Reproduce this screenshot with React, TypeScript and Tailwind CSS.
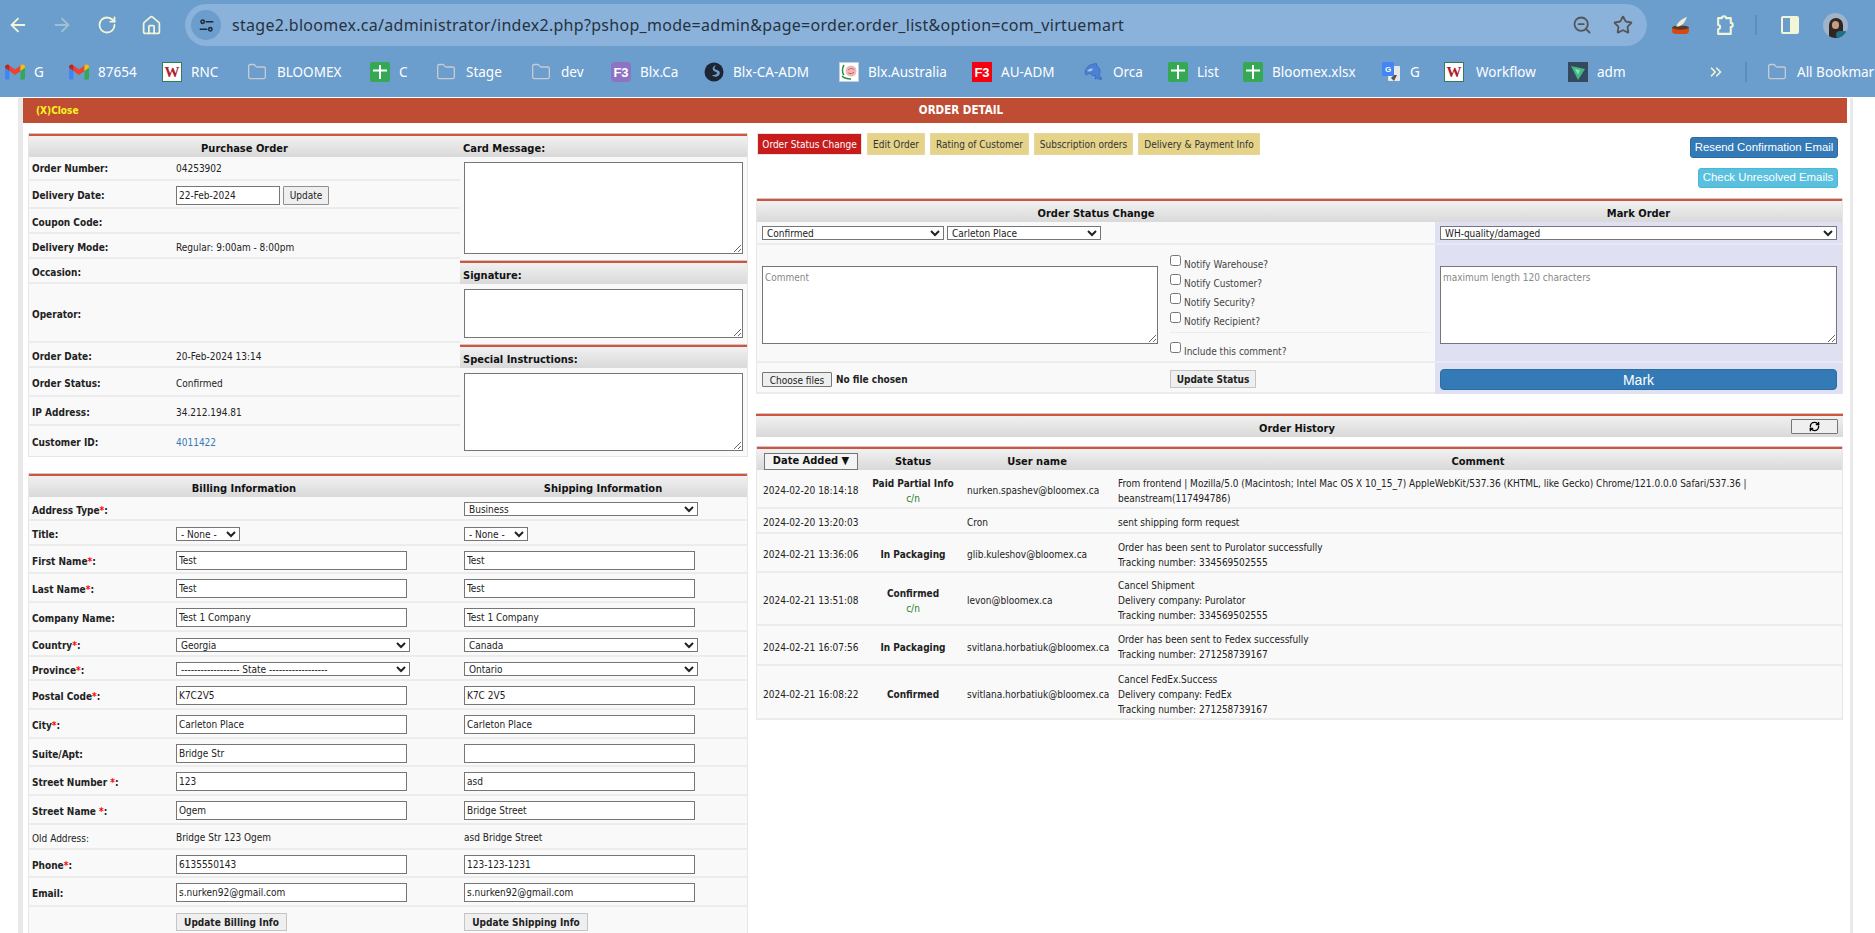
import { ArrowLeft, ArrowRight, ChevronsRight, Folder, House, RefreshCw, RotateCw, Star, ZoomOut } from "lucide-react";
import type { ReactNode } from "react";

const uiFont = "font-['DejaVu_Sans_Condensed','DejaVu_Sans',sans-serif]";

function Sheet() {
  return (
    <svg viewBox="0 0 20 20" className="h-5 w-5">
      <rect width="20" height="20" rx="2" fill="#34a853" />
      <path d="M9 3h2v4.500h6v2h-6V17H9V9.500H3v-2h6z" fill="#fff" />
    </svg>
  );
}

function Gmail() {
  return (
    <svg viewBox="0 0 20 16" className="h-4 w-5">
      <path d="M0 3v11a1.500 1.500 0 0 0 1.500 1.500H4.500V7z" fill="#4285f4" />
      <path d="M20 3v11a1.500 1.500 0 0 1-1.500 1.500H15.500V7z" fill="#34a853" />
      <path d="M4.500 7 10 11l5.500-4V1.500L10 5.500 4.500 1.500z" fill="#ea4335" />
      <path d="M0 3c0-2.500 3-3.500 4.500-1.500V7L0 3.800z" fill="#c5221f" />
      <path d="M20 3c0-2.500-3-3.500-4.500-1.500V7L20 3.800z" fill="#fbbc04" />
    </svg>
  );
}

function Wiki() {
  return (
    <span className="flex h-5 w-5 items-center justify-center border border-[#2f7d5b] bg-white font-['Liberation_Serif',serif] text-[15px] font-bold leading-none text-[#b01c2e]">
      W
    </span>
  );
}

function F3({ bg, square }: { bg: string; square?: boolean }) {
  return (
    <span className={`flex h-5 w-5 items-center justify-center font-['Liberation_Sans',sans-serif] text-[13px] font-bold leading-none text-white ${bg} ${square ? "" : "rounded-[4px]"}`}>
      F3
    </span>
  );
}

function Globe() {
  return (
    <svg viewBox="0 0 20 20" className="h-5 w-5">
      <circle cx="10" cy="10" r="9.500" fill="#1d2530" />
      <path d="M12 3c-3 1-4 3-3 5s4 1.500 4 3-2 2-5 2c1 1.500 3 2 5 1.500 3-1 3.500-4 2-5.500s-4.500-1-4.500-3c0-1 1-2 1.500-3z" fill="#6b9dcd" />
    </svg>
  );
}

function Rose() {
  return (
    <svg viewBox="0 0 20 20" className="h-5 w-5">
      <rect width="20" height="20" fill="#fff" />
      <rect x=".5" y=".5" width="19" height="19" fill="none" stroke="#bcd0e6" />
      <circle cx="12" cy="9" r="5.500" fill="#efb7b7" />
      <path d="M9 8c2-2 5-2 6 0M9.500 11c2 1 4 1 5.500-1" stroke="#c85a5a" strokeWidth="1" fill="none" />
      <path d="M5 3C3 6 3 11 5 13M3 14c3 3 6 3 9 3" stroke="#2f8a45" strokeWidth="1.500" fill="none" />
    </svg>
  );
}

function Orca() {
  return (
    <svg viewBox="0 0 20 20" className="h-5 w-5">
      <path d="M1 10C2 5 6 2 11 2l1-1 1 3c3 2 4 6 2 9l3 4c-2 1-4 0-5-1l-2 1 1-3c-3 0-5-1-6-3L2 13z" fill="#4b82d6" stroke="#2f63b5" strokeWidth=".7" />
      <path d="M3 9c2-2 4-3 6-2-1 2-3 3-6 2z" fill="#a8c8f0" />
    </svg>
  );
}

function Translate() {
  return (
    <svg viewBox="0 0 20 20" className="h-5 w-5">
      <rect x="7" y="4" width="12" height="15" rx="1" fill="#e8e8e8" />
      <rect x="1" y="0" width="12" height="14" rx="1.500" fill="#4285f4" />
      <text x="7" y="10" fontSize="8" fontWeight="bold" textAnchor="middle" fill="#fff" fontFamily="Liberation Sans">G</text>
      <path d="M10 16l3-3h3l-3 6z" fill="#555" />
    </svg>
  );
}

function Adm() {
  return (
    <svg viewBox="0 0 20 20" className="h-5 w-5">
      <rect width="20" height="20" fill="#34495e" />
      <path d="M3 4l14 3-7 11z" fill="#41b883" />
      <path d="M7 7l5 1-2 5z" fill="#8fdcb8" />
    </svg>
  );
}

const FolderIcon = () => <Folder className="h-5 w-5 text-[#c8ccd0]" strokeWidth={1.6} />;

const bookmarks: { icon: ReactNode; label: string; width: string; gap?: string }[] = [
  { icon: <Gmail />, label: "G", width: "w-[64px]" },
  { icon: <Gmail />, label: "87654", width: "w-[93px]" },
  { icon: <Wiki />, label: "RNC", width: "w-[85px]" },
  { icon: <FolderIcon />, label: "BLOOMEX", width: "w-[123px]", gap: "gap-[10px]" },
  { icon: <Sheet />, label: "C", width: "w-[66px]" },
  { icon: <FolderIcon />, label: "Stage", width: "w-[95px]", gap: "gap-[10px]" },
  { icon: <FolderIcon />, label: "dev", width: "w-[80px]", gap: "gap-[10px]" },
  { icon: <F3 bg="bg-[#8e72c4]" />, label: "Blx.Ca", width: "w-[93px]" },
  { icon: <Globe />, label: "Blx-CA-ADM", width: "w-[135px]" },
  { icon: <Rose />, label: "Blx.Australia", width: "w-[133px]" },
  { icon: <F3 bg="bg-[#f5000f]" square />, label: "AU-ADM", width: "w-[112px]" },
  { icon: <Orca />, label: "Orca", width: "w-[84px]" },
  { icon: <Sheet />, label: "List", width: "w-[75px]" },
  { icon: <Sheet />, label: "Bloomex.xlsx", width: "w-[138px]" },
  { icon: <Translate />, label: "G", width: "w-[63px]" },
  { icon: <Wiki />, label: "Workflow", width: "w-[124px]", gap: "gap-[12px]" },
  { icon: <Adm />, label: "adm", width: "w-[139px]" },
];

function BrowserChrome() {
  return (
    <div className="h-[97px] shrink-0 overflow-hidden bg-[#6b9dcd] font-['Noto_Sans',sans-serif]">
      <div className="flex h-[50px] items-start pt-1">
        <div className="flex h-[42px] w-[185px] items-center text-[#f1f6d6]">
          <ArrowLeft className="ml-[7px] h-[22px] w-[22px]" strokeWidth={2} />
          <ArrowRight className="ml-[22px] h-[22px] w-[22px] opacity-40" strokeWidth={2} />
          <RotateCw className="ml-[24px] h-[20px] w-[20px]" strokeWidth={2.2} />
          <House className="ml-[24px] h-[21px] w-[21px]" strokeWidth={2} />
        </div>
        <div className="flex h-[42px] w-[1462px] items-center rounded-full bg-[#8bb2db] pl-[6px] pr-[14px]">
          <div className="flex h-[30px] w-[30px] items-center justify-center rounded-full bg-[#6b9dcd]">
            <svg viewBox="0 0 20 20" className="h-[17px] w-[17px]" fill="none" stroke="#202a36" strokeWidth="1.800">
              <circle cx="5.500" cy="5.500" r="2" />
              <path d="M9 5.500h9M2 14.500h9" />
              <circle cx="14.500" cy="14.500" r="2" />
            </svg>
          </div>
          <span className="ml-[11px] flex-1 whitespace-nowrap text-[16px] tracking-[0.29px] text-[#26323f]">
            stage2.bloomex.ca/administrator/index2.php?pshop_mode=admin&amp;page=order.order_list&amp;option=com_virtuemart
          </span>
          <ZoomOut className="h-[20px] w-[20px] text-[#555]" strokeWidth={2.2} />
          <Star className="ml-[21px] h-[20px] w-[20px] text-[#555]" strokeWidth={2.2} />
        </div>
        <div className="flex h-[42px] flex-1 items-center">
          <svg viewBox="0 0 18 18" className="ml-[24px] h-[19px] w-[19px]">
            <path d="M1 11h16v3c0 2-1.500 3-3 3H4c-1.500 0-3-1-3-3z" fill="#d9480f" />
            <ellipse cx="9" cy="11" rx="8" ry="2" fill="#5b3a29" />
            <path d="M5 10C6 6 10 3 15 1c-1 4-4 8-8 9z" fill="#f3ecd2" />
          </svg>
          <svg viewBox="0 0 20 20" className="ml-[25px] h-[21px] w-[21px]" fill="none" stroke="#f1f6d6" strokeWidth="2">
            <path d="M3 3h3.500c0-2.500 4-2.500 4 0H15v4.500c2.500 0 2.500 4 0 4V18H3v-4.500c2.500 0 2.500-4 0-4z" strokeLinejoin="round" />
          </svg>
          <span className="ml-[19px] h-[20px] w-[2px] bg-[#5e8dbb]" />
          <span className="ml-[24px] flex h-[18px] w-[18px] rounded-[2px] border-2 border-[#f1f6d6]">
            <span className="ml-auto h-full w-[7px] bg-[#f1f6d6]" />
          </span>
          <span className="relative ml-[24px] h-[25px] w-[25px] overflow-hidden rounded-full bg-[#9fb4c8]">
            <span className="absolute left-[6px] top-[5px] h-[22px] w-[14px] rounded-t-full bg-[#2e2622]" />
            <span className="absolute left-[9px] top-[8px] h-[8px] w-[7px] rounded-full bg-[#c99d84]" />
            <span className="absolute left-[13px] top-[18px] h-[8px] w-[12px] rounded-full bg-[#1f6f86]" />
          </span>
        </div>
      </div>
      <div className="flex h-[44px] items-center whitespace-nowrap pl-[5px] text-[13.5px] text-white">
        {bookmarks.map((b, i) => (
          <div key={i} className={`flex shrink-0 items-center ${b.gap ?? "gap-[9px]"} ${b.width}`}>
            <span className="flex w-5 items-center justify-center">{b.icon}</span>
            <span>{b.label}</span>
          </div>
        ))}
        <ChevronsRight className="h-[18px] w-[18px] shrink-0 text-[#f1f6d6]" strokeWidth={2.2} />
        <span className="ml-[20px] h-[20px] w-[2px] shrink-0 bg-[#5e8dbb]" />
        <span className="ml-[20px] flex shrink-0 items-center gap-[10px]">
          <FolderIcon />
          <span>All Bookmarks</span>
        </span>
      </div>
    </div>
  );
}

function SectionHead({ children, className = "" }: { children?: ReactNode; className?: string }) {
  return (
    <div className={`h-[24px] shrink-0 border-t border-[#c9c9c9] ${className}`}>
      <div className="flex h-[23px] items-center border-t-2 border-[#d4533f] bg-gradient-to-b from-[#f1f1f1] to-[#d9d9d9] pt-[6px] text-[11px] font-bold text-[#111]">
        {children}
      </div>
    </div>
  );
}

const orderRows: { label: string; value?: ReactNode; height: string; pad: string }[] = [
  { label: "Order Number:", value: "04253902", height: "h-[24px]", pad: "pt-0" },
  {
    label: "Delivery Date:",
    height: "h-[28px]",
    pad: "pt-[3px]",
    value: (
      <span className="flex items-center gap-[3px]">
        <input defaultValue="22-Feb-2024" className="h-[19px] w-[104px] border border-[#767676] bg-white px-[2px] outline-none" />
        <button className="h-[19px] w-[46px] rounded-[1px] border border-[#8f8f8f] bg-[#efefef]">Update</button>
      </span>
    ),
  },
  { label: "Coupon Code:", height: "h-[25px]", pad: "pt-[4px]" },
  { label: "Delivery Mode:", value: "Regular: 9:00am - 8:00pm", height: "h-[25px]", pad: "pt-[4px]" },
  { label: "Occasion:", height: "h-[25px]", pad: "pt-[4px]" },
  { label: "Operator:", height: "h-[59px]", pad: "pt-[3px]" },
  { label: "Order Date:", value: "20-Feb-2024 13:14", height: "h-[25px]", pad: "pt-[3px]" },
  { label: "Order Status:", value: "Confirmed", height: "h-[29px]", pad: "pt-[3px]" },
  { label: "IP Address:", value: "34.212.194.81", height: "h-[29px]", pad: "pt-[4px]" },
  { label: "Customer ID:", value: <span className="text-[#337ab7]">4011422</span>, height: "h-[30px]", pad: "pt-[2px]" },
];

function PurchaseOrder() {
  return (
    <div className="flex border-x border-b border-[#e6e6e6] bg-[#f9f9f9] text-[10px] text-[#222]">
      <div className="w-[431px] shrink-0">
        <SectionHead>
          <span className="w-full text-center">Purchase Order</span>
        </SectionHead>
        {orderRows.map((r) => (
          <div key={r.label} className={`flex items-center border-b-2 border-[#ececec] pl-[3px] last:border-b-0 ${r.height} ${r.pad}`}>
            <span className="w-[144px] shrink-0 font-bold">{r.label}</span>
            {r.value}
          </div>
        ))}
      </div>
      <div className="flex-1">
        <SectionHead>
          <span className="pl-[3px]">Card Message:</span>
        </SectionHead>
        <div className="h-[103px] pl-[4px] pt-[5px]">
          <textarea className="block h-[92px] w-[279px] border border-[#767676] bg-white" />
        </div>
        <SectionHead>
          <span className="pl-[3px]">Signature:</span>
        </SectionHead>
        <div className="h-[60px] pl-[4px] pt-[5px]">
          <textarea className="block h-[49px] w-[279px] border border-[#767676] bg-white" />
        </div>
        <SectionHead>
          <span className="pl-[3px]">Special Instructions:</span>
        </SectionHead>
        <div className="h-[87px] pl-[4px] pt-[5px]">
          <textarea className="block h-[78px] w-[279px] border border-[#767676] bg-white" />
        </div>
      </div>
    </div>
  );
}

function Req() {
  return <span className="text-[#f00]">*</span>;
}

function TextCell({ value }: { value: string }) {
  return <input defaultValue={value} className="h-[19px] w-[231px] border border-[#767676] bg-white px-[2px] outline-none" />;
}

function SelectCell({ value, width }: { value: string; width: string }) {
  return (
    <select defaultValue={value} className={`h-[14px] border border-[#767676] bg-white text-[10px] outline-none ${width}`}>
      <option>{value}</option>
    </select>
  );
}

const addressRows: { label: ReactNode; billing?: ReactNode; shipping?: ReactNode; height: string; plain?: boolean }[] = [
  { label: <>Address Type<Req />:</>, shipping: <SelectCell value="Business" width="w-[234px]" />, height: "h-[24px]" },
  { label: "Title:", billing: <SelectCell value="- None -" width="w-[64px]" />, shipping: <SelectCell value="- None -" width="w-[64px]" />, height: "h-[25px]" },
  { label: <>First Name<Req />:</>, billing: <TextCell value="Test" />, shipping: <TextCell value="Test" />, height: "h-[28px]" },
  { label: <>Last Name<Req />:</>, billing: <TextCell value="Test" />, shipping: <TextCell value="Test" />, height: "h-[29px]" },
  { label: "Company Name:", billing: <TextCell value="Test 1 Company" />, shipping: <TextCell value="Test 1 Company" />, height: "h-[29px]" },
  { label: <>Country<Req />:</>, billing: <SelectCell value="Georgia" width="w-[234px]" />, shipping: <SelectCell value="Canada" width="w-[234px]" />, height: "h-[25px]" },
  { label: <>Province<Req />:</>, billing: <SelectCell value="------------------ State ------------------" width="w-[234px]" />, shipping: <SelectCell value="Ontario" width="w-[234px]" />, height: "h-[24px]" },
  { label: <>Postal Code<Req />:</>, billing: <TextCell value="K7C2V5" />, shipping: <TextCell value="K7C 2V5" />, height: "h-[29px]" },
  { label: <>City<Req />:</>, billing: <TextCell value="Carleton Place" />, shipping: <TextCell value="Carleton Place" />, height: "h-[29px]" },
  { label: "Suite/Apt:", billing: <TextCell value="Bridge Str" />, shipping: <TextCell value="" />, height: "h-[28px]" },
  { label: <>Street Number <Req />:</>, billing: <TextCell value="123" />, shipping: <TextCell value="asd" />, height: "h-[29px]" },
  { label: <>Street Name <Req />:</>, billing: <TextCell value="Ogem" />, shipping: <TextCell value="Bridge Street" />, height: "h-[29px]" },
  { label: "Old Address:", billing: "Bridge Str 123 Ogem", shipping: "asd Bridge Street", height: "h-[25px]", plain: true },
  { label: <>Phone<Req />:</>, billing: <TextCell value="6135550143" />, shipping: <TextCell value="123-123-1231" />, height: "h-[28px]" },
  { label: "Email:", billing: <TextCell value="s.nurken92@gmail.com" />, shipping: <TextCell value="s.nurken92@gmail.com" />, height: "h-[29px]" },
];

function AddressForm() {
  return (
    <div className="mt-[16px] border-x border-[#e6e6e6] bg-[#f9f9f9] text-[10px] text-[#222]">
      <SectionHead>
        <span className="w-[430px] text-center">Billing Information</span>
        <span className="flex-1 text-center">Shipping Information</span>
      </SectionHead>
      {addressRows.map((r, i) => (
        <div key={i} className={`grid grid-cols-[144px_288px_1fr] items-center border-b-2 border-[#ececec] pl-[3px] pt-[2px] ${r.height}`}>
          <span className={`pt-[2px] ${r.plain ? "" : "font-bold"}`}>{r.label}</span>
          <span className="flex items-center">{r.billing}</span>
          <span className="flex items-center">{r.shipping}</span>
        </div>
      ))}
      <div className="grid h-[30px] grid-cols-[144px_288px_1fr] items-start pl-[3px] pt-[6px]">
        <span />
        <span>
          <button className="h-[18px] w-[111px] border border-[#c4c4c4] bg-[#efefef] font-bold">Update Billing Info</button>
        </span>
        <span>
          <button className="h-[18px] w-[124px] border border-[#c4c4c4] bg-[#efefef] font-bold">Update Shipping Info</button>
        </span>
      </div>
    </div>
  );
}

const tabs = [
  { label: "Order Status Change", width: "w-[105px]", active: true },
  { label: "Edit Order", width: "w-[58px]" },
  { label: "Rating of Customer", width: "w-[99px]" },
  { label: "Subscription orders", width: "w-[99px]" },
  { label: "Delivery & Payment Info", width: "w-[122px]" },
];

function TopActions() {
  return (
    <div className="flex h-[65px] justify-between text-[10px]">
      <div className="flex h-[22px] gap-[5px] pl-[1px]">
        {tabs.map((t) => (
          <div
            key={t.label}
            className={`flex items-center justify-center border whitespace-nowrap ${t.width} ${
              t.active ? "border-[#e4e4e4] bg-[#c81c1c] text-white" : "border-[#e6d79f] bg-[#e5d38a] text-[#333]"
            }`}
          >
            {t.label}
          </div>
        ))}
      </div>
      <div className="flex flex-col items-end gap-[10px] whitespace-nowrap pr-[5px] pt-[4px] font-['Liberation_Sans',sans-serif] text-[11.4px] text-white">
        <button className="h-[21px] w-[148px] rounded-[3px] border border-[#2e6da4] bg-[#337ab7]">Resend Confirmation Email</button>
        <button className="h-[20px] w-[140px] rounded-[3px] border border-[#46b8da] bg-[#5bc0de]">Check Unresolved Emails</button>
      </div>
    </div>
  );
}

function Notify({ label, className = "" }: { label: string; className?: string }) {
  return (
    <label className={`flex h-[19px] gap-[3px] text-[#444] ${className}`}>
      <input type="checkbox" className="h-[11px] w-[11px] shrink-0" />
      <span className="pt-[2px]">{label}</span>
    </label>
  );
}

function StatusPanel() {
  return (
    <div className="flex text-[10px] text-[#222]">
      <div className="w-[679px] shrink-0 border-l border-[#e6e6e6] bg-[#f9f9f9]">
        <SectionHead>
          <span className="w-full text-center">Order Status Change</span>
        </SectionHead>
        <div className="flex h-[23px] items-center gap-[3px] border-b-2 border-[#ececec] pl-[5px] pt-[1px]">
          <SelectCell value="Confirmed" width="w-[182px]" />
          <SelectCell value="Carleton Place" width="w-[154px]" />
        </div>
        <div className="flex h-[118px] border-b-2 border-[#ececec] pl-[5px]">
          <textarea placeholder="Comment" className="mt-[21px] block h-[78px] w-[396px] border border-[#767676] bg-white px-[2px] py-[3px] placeholder:text-[#888]" />
          <div className="ml-[12px] w-[261px] pt-[10px]">
            <Notify label="Notify Warehouse?" />
            <Notify label="Notify Customer?" />
            <Notify label="Notify Security?" />
            <Notify label="Notify Recipient?" />
            <div className="mt-[1px] border-t border-[#ececec] pt-[9px]">
              <Notify label="Include this comment?" />
            </div>
          </div>
        </div>
        <div className="flex h-[31px] items-center border-b-2 border-[#ececec] pl-[5px] pt-[3px]">
          <button className="h-[15px] w-[70px] rounded-[1px] border border-[#767676] bg-[#efefef]">Choose files</button>
          <span className="ml-[4px] w-[334px] font-bold">No file chosen</span>
          <button className="h-[18px] w-[86px] border border-[#c4c4c4] bg-[#efefef] font-bold">Update Status</button>
        </div>
      </div>
      <div className="flex-1 border-r border-[#e6e6e6] bg-[#dfe0f2]">
        <SectionHead>
          <span className="w-full text-center">Mark Order</span>
        </SectionHead>
        <div className="flex h-[23px] items-center border-b-2 border-[#e9e9f4] pl-[5px] pt-[1px]">
          <SelectCell value="WH-quality/damaged" width="w-[397px]" />
        </div>
        <div className="h-[118px] border-b-2 border-[#e9e9f4] pl-[5px] pt-[21px]">
          <textarea placeholder="maximum length 120 characters" className="block h-[78px] w-[397px] border border-[#767676] bg-white px-[2px] py-[3px] placeholder:text-[#888]" />
        </div>
        <div className="flex h-[31px] items-center pl-[5px] pt-[2px]">
          <button className="h-[21px] w-[397px] rounded-[4px] border border-[#2e6da4] bg-[#337ab7] font-['Liberation_Sans',sans-serif] text-[14px] text-white">Mark</button>
        </div>
      </div>
    </div>
  );
}

const history: { date: string; status?: string; cn?: boolean; user: string; comment: string[]; height: string }[] = [
  {
    date: "2024-02-20 18:14:18",
    status: "Paid Partial Info",
    cn: true,
    user: "nurken.spashev@bloomex.ca",
    comment: ["From frontend | Mozilla/5.0 (Macintosh; Intel Mac OS X 10_15_7) AppleWebKit/537.36 (KHTML, like Gecko) Chrome/121.0.0.0 Safari/537.36 |", "beanstream(117494786)"],
    height: "h-[39px]",
  },
  { date: "2024-02-20 13:20:03", user: "Cron", comment: ["sent shipping form request"], height: "h-[25px]" },
  {
    date: "2024-02-21 13:36:06",
    status: "In Packaging",
    user: "glib.kuleshov@bloomex.ca",
    comment: ["Order has been sent to Purolator successfully", "Tracking number: 334569502555"],
    height: "h-[39px]",
  },
  {
    date: "2024-02-21 13:51:08",
    status: "Confirmed",
    cn: true,
    user: "levon@bloomex.ca",
    comment: ["Cancel Shipment", "Delivery company: Purolator", "Tracking number: 334569502555"],
    height: "h-[53px]",
  },
  {
    date: "2024-02-21 16:07:56",
    status: "In Packaging",
    user: "svitlana.horbatiuk@bloomex.ca",
    comment: ["Order has been sent to Fedex successfully", "Tracking number: 271258739167"],
    height: "h-[40px]",
  },
  {
    date: "2024-02-21 16:08:22",
    status: "Confirmed",
    user: "svitlana.horbatiuk@bloomex.ca",
    comment: ["Cancel FedEx.Success", "Delivery company: FedEx", "Tracking number: 271258739167"],
    height: "h-[54px]",
  },
];

function OrderHistory() {
  return (
    <div className="mt-[19px] text-[10px] text-[#222]">
      <SectionHead>
        <span className="flex-1 pl-[47px] text-center">Order History</span>
        <button className="-mt-[6px] mr-[5px] flex h-[15px] w-[47px] items-center justify-center rounded-[1px] border border-[#767676] bg-[#efefef]">
          <RefreshCw className="h-[11px] w-[11px] text-black" strokeWidth={3} />
        </button>
      </SectionHead>
      <div className="mt-[9px] border-x border-[#e6e6e6] bg-[#f9f9f9]">
        <SectionHead>
          <div className="-mt-[2px] ml-[7px] flex h-[17px] w-[94px] shrink-0 items-center justify-center border border-[#767676] bg-[#f4f4f4] text-[11px]">Date Added ▼</div>
          <span className="ml-[8px] w-[94px] text-center">Status</span>
          <span className="w-[154px] text-center">User name</span>
          <span className="flex-1 text-center">Comment</span>
        </SectionHead>
        {history.map((h) => (
          <div key={h.date} className={`grid grid-cols-[109px_94px_154px_1fr] items-center border-b-2 border-[#ececec] pt-[4px] ${h.height}`}>
            <span className="pl-[6px] whitespace-nowrap">{h.date}</span>
            <span className="text-center font-bold leading-[15px]">
              {h.status}
              {h.cn && <span className="block font-normal text-[#2a7d2a]">c/n</span>}
            </span>
            <span className="whitespace-nowrap pl-[7px]">{h.user}</span>
            <span className="pl-[4px] leading-[15px]">
              {h.comment.map((line) => (
                <span key={line} className="block">{line}</span>
              ))}
            </span>
          </div>
        ))}
      </div>
    </div>
  );
}

export default function App() {
  return (
    <div className={`flex h-[933px] w-[1875px] flex-col overflow-hidden bg-white ${uiFont}`}>
      <BrowserChrome />
      <div className="ml-[18px] mt-[1px] flex h-[835px] w-[1835px] flex-col overflow-hidden border-x-[3px] border-l-[5px] border-[#e9e9e9] pr-[3px]">
        <div className="relative flex h-[25px] shrink-0 items-center justify-center bg-[#bf4d34] pl-[52px] text-[11.5px] font-bold text-white">
          <span className="absolute left-[13px] text-[10px] text-[#f7f71d]">(X)Close</span>
          ORDER DETAIL
        </div>
        <div className="flex gap-[8px] pl-[5px] pr-[4px] pt-[10px]">
          <div className="w-[720px] shrink-0">
            <PurchaseOrder />
            <AddressForm />
          </div>
          <div className="flex-1">
            <TopActions />
            <StatusPanel />
            <OrderHistory />
          </div>
        </div>
      </div>
    </div>
  );
}
